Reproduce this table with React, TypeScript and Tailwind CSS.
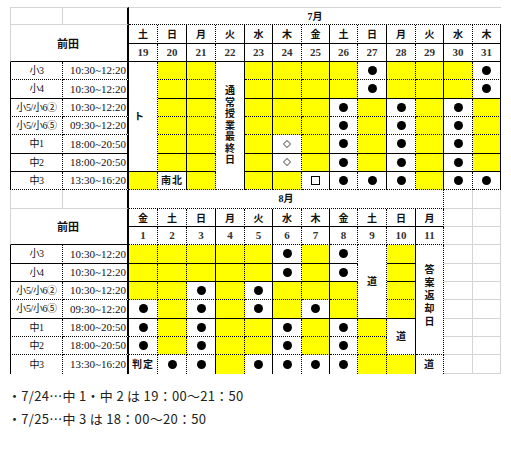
import type { ReactNode } from "react";

const vl: Record<string, string> = {
  s: "border-r border-r-black",
  d: "border-r border-r-black [border-right-style:dotted]",
  t: "border-r-2 border-r-black",
  g: "border-r border-r-[#d4d4d4]",
  n: "",
};
const hl: Record<string, string> = {
  s: "border-b border-b-black",
  d: "border-b border-b-black [border-bottom-style:dotted]",
  g: "border-b border-b-[#d4d4d4]",
  n: "",
};
const rowSpan: Record<number, string> = { 1: "", 2: "row-span-2", 4: "row-span-4", 6: "row-span-6", 7: "row-span-7" };

const labels = [
  ["小3", "10:30~12:20"],
  ["小4", "10:30~12:20"],
  ["小5/小6②", "10:30~12:20"],
  ["小5/小6⑤", "09:30~12:20"],
  ["中1", "18:00~20:50"],
  ["中2", "18:00~20:50"],
  ["中3", "13:30~16:20"],
];

type Day = { w: string; d: string; cells: string[] };

const july: Day[] = [
  { w: "土", d: "19", cells: ["M6:ト", "_", "_", "_", "_", "_", "y"] },
  { w: "日", d: "20", cells: ["y", "y", "y", "y", "y", "y", "南北"] },
  { w: "月", d: "21", cells: ["y", "y", "y", "y", "y", "y", "y"] },
  { w: "火", d: "22", cells: ["V7:通常授業最終日", "_", "_", "_", "_", "_", "_"] },
  { w: "水", d: "23", cells: ["y", "y", "y", "y", "y", "y", "y"] },
  { w: "木", d: "24", cells: ["y", "y", "y", "y", "◇", "◇", "y"] },
  { w: "金", d: "25", cells: ["y", "y", "y", "y", "y", "y", "□"] },
  { w: "土", d: "26", cells: ["y", "y", "●", "●", "●", "●", "●"] },
  { w: "日", d: "27", cells: ["●", "●", "y", "y", "y", "y", "●"] },
  { w: "月", d: "28", cells: ["y", "y", "●", "●", "●", "●", "●"] },
  { w: "火", d: "29", cells: ["y", "y", "y", "y", "y", "y", "y"] },
  { w: "水", d: "30", cells: ["y", "y", "●", "●", "●", "●", "●"] },
  { w: "木", d: "31", cells: ["●", "●", "y", "y", "y", "y", "●"] },
];

const august: Day[] = [
  { w: "金", d: "1", cells: ["y", "y", "y", "●", "●", "●", "判定"] },
  { w: "土", d: "2", cells: ["y", "y", "y", "y", "y", "y", "●"] },
  { w: "日", d: "3", cells: ["y", "y", "●", "●", "●", "●", "●"] },
  { w: "月", d: "4", cells: ["y", "y", "y", "y", "y", "y", "y"] },
  { w: "火", d: "5", cells: ["y", "y", "●", "●", "y", "y", "●"] },
  { w: "水", d: "6", cells: ["●", "●", "y", "y", "●", "●", "●"] },
  { w: "木", d: "7", cells: ["y", "y", "y", "●", "y", "y", "●"] },
  { w: "金", d: "8", cells: ["●", "●", "y", "y", "●", "●", "●"] },
  { w: "土", d: "9", cells: ["M4:道", "_", "_", "_", "y", "y", "y"] },
  { w: "日", d: "10", cells: ["y", "y", "y", "y", "M2:道", "_", "y"] },
  { w: "月", d: "11", cells: ["V6:答案返却日", "_", "_", "_", "_", "_", "道"] },
];

function Cell({ r, b, cls = "", children }: { r: string; b: string; cls?: string; children?: ReactNode }) {
  return (
    <div className={`flex items-center justify-center overflow-hidden ${vl[r]} ${hl[b]} ${cls}`}>{children}</div>
  );
}

function Mark({ tok }: { tok: string }) {
  if (tok === "●") return <div className="w-[9px] h-[9px] rounded-full bg-black" />;
  if (tok === "◇") return <div className="w-[6px] h-[6px] rotate-45 border border-[#777]" />;
  if (tok === "□") return <div className="w-[9px] h-[9px] border-[1.5px] border-black" />;
  return <span className="text-[10px] font-bold tracking-[1px]">{tok}</span>;
}

function Sheet({
  month,
  days,
  vlines,
  hlines,
  first,
  extra,
}: {
  month: string;
  days: Day[];
  vlines: string[];
  hlines: string[];
  first: boolean;
  extra: number;
}) {
  const nodes: ReactNode[] = [];
  const gray = (k: string, row: number) =>
    Array.from({ length: extra }, (_, i) => <Cell key={`${k}${row}-${i}`} r="g" b="g" />);

  // row 0: month header
  nodes.push(
    <Cell key="a0" r="g" b="g" cls={`border-l border-l-[#d4d4d4] ${first ? "border-t border-t-[#d4d4d4]" : ""}`} />,
    <Cell key="b0" r="t" b="g" cls={first ? "border-t border-t-[#d4d4d4]" : ""} />,
    <Cell key="m0" r={first ? "n" : "d"} b="d" cls={first ? "col-span-13 border-t border-t-[#d4d4d4]" : "col-span-11"}>
      <span className="text-[10px] font-bold">{month}</span>
    </Cell>,
    ...gray("x", 0)
  );

  // rows 1-2: weekday / date
  nodes.push(
    <Cell key="name" r="t" b="s" cls="col-span-2 row-span-2 border-l border-l-[#d4d4d4]">
      <span className="text-[11px] font-bold pr-[2px] [font-family:'Noto_Sans_CJK_JP',sans-serif]">前田</span>
    </Cell>
  );
  days.forEach((d, i) =>
    nodes.push(
      <Cell key={`w${i}`} r={vlines[i]} b={hlines[1]}>
        <span className="text-[10px] font-bold [font-family:'Noto_Sans_CJK_JP',sans-serif]">{d.w}</span>
      </Cell>
    )
  );
  nodes.push(...gray("x", 1));
  days.forEach((d, i) =>
    nodes.push(
      <Cell key={`d${i}`} r={vlines[i]} b={hlines[2]}>
        <span className="text-[11px] font-bold text-[#333]">{d.d}</span>
      </Cell>
    )
  );
  nodes.push(...gray("x", 2));

  // data rows
  labels.forEach(([lab, time], ri) => {
    const row = ri + 3;
    nodes.push(
      <Cell key={`l${ri}`} r="d" b={hlines[row]} cls="border-l border-l-black">
        <span className="text-[10px] whitespace-nowrap tracking-[-0.4px]">{lab}</span>
      </Cell>,
      <Cell key={`t${ri}`} r="t" b={hlines[row]}>
        <span className="text-[11px] whitespace-nowrap pl-[6px]">{time}</span>
      </Cell>
    );
    days.forEach((d, ci) => {
      const tok = d.cells[ri];
      if (tok === "_") return;
      if (tok.startsWith("M") || tok.startsWith("V")) {
        const n = Number(tok.slice(1, tok.indexOf(":")));
        const text = tok.slice(tok.indexOf(":") + 1);
        nodes.push(
          <Cell key={`c${ri}-${ci}`} r={vlines[ci]} b={hlines[row + n - 1]} cls={rowSpan[n]}>
            {tok.startsWith("V") ? (
              <div
                className={`flex flex-col items-center text-[10px] font-bold ${
                  n === 7 ? "leading-[11.5px]" : "leading-[13px] pb-[8px]"
                }`}
              >
                {text.split("").map((ch, k) => (
                  <span key={k}>{ch}</span>
                ))}
              </div>
            ) : (
              <span className={`text-[10px] font-bold ${text === "ト" ? "pr-[8px]" : ""}`}>{text}</span>
            )}
          </Cell>
        );
        return;
      }
      nodes.push(
        <Cell key={`c${ri}-${ci}`} r={vlines[ci]} b={hlines[row]} cls={tok === "y" ? "bg-[#ffff00]" : ""}>
          {tok !== "y" && <Mark tok={tok} />}
        </Cell>
      );
    });
    nodes.push(...gray("x", row));
  });

  return (
    <div className="grid grid-cols-[53px_66px_29px_29px_29px_29px_28px_29px_28px_28px_29px_29px_28px_29px_28px] grid-rows-[repeat(10,18.33px)]">
      {nodes}
    </div>
  );
}

export default function App() {
  return (
    <div
      lang="ja"
      className="w-[511px] h-[453px] bg-white pl-[10px] pt-[7px] text-[#111] [font-family:'Liberation_Serif','Noto_Sans_CJK_JP',serif] overflow-hidden"
    >
      <Sheet
        month="7月"
        days={july}
        first
        extra={0}
        vlines={["d", "s", "d", "s", "s", "d", "s", "d", "s", "d", "s", "d", "s"]}
        hlines={["d", "s", "s", "d", "s", "d", "d", "s", "s", "d"]}
      />
      <div className="h-[183.3px] overflow-hidden">
        <Sheet
          month="8月"
          days={august}
          first={false}
          extra={2}
          vlines={["d", "d", "s", "d", "s", "d", "s", "d", "d", "s", "d"]}
          hlines={["d", "s", "d", "s", "s", "d", "s", "d", "d", "n"]}
        />
      </div>
      <div className="mt-[10px] -ml-[2px] [font-family:'Noto_Sans_CJK_JP',sans-serif] text-[13px] leading-[23px] tracking-[0.3px] text-[#222]">
        <p>・7/24…中 1・中 2 は 19：00～21：50</p>
        <p>・7/25…中 3 は 18：00～20：50</p>
      </div>
    </div>
  );
}
